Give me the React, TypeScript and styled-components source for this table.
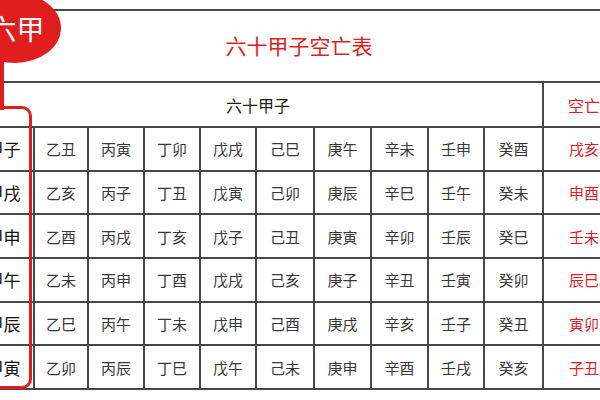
import styled, { createGlobalStyle } from 'styled-components';

const GlobalStyle = createGlobalStyle`
  html, body {
    margin: 0;
    padding: 0;
    background: #fff;
  }
  body {
    width: 600px;
    height: 400px;
    overflow: hidden;
    font-family: "Noto Sans CJK SC", "Noto Sans", sans-serif;
  }
`;

const RED = '#e01e1e';
const LINE = '2px solid #474747';

const Page = styled.div`
  position: relative;
  width: 600px;
  height: 400px;
  overflow: hidden;
  padding-top: 9px;
  box-sizing: border-box;
`;

const Table = styled.table`
  border-collapse: collapse;
  table-layout: fixed;
  width: 652px;
  margin-left: -28px;
`;

const TitleCell = styled.td`
  height: 68px;
  border: ${LINE};
  text-align: center;
  color: ${RED};
  font-size: 21px;
  padding: 0 0 2px;
`;

const HeadCell = styled.td<{ $red?: boolean }>`
  height: 43px;
  border: ${LINE};
  text-align: center;
  font-size: 16px;
  padding: 0;
  color: ${(p) => (p.$red ? RED : '#1e1e1e')};
`;

const Cell = styled.td<{ $kind?: 'first' | 'void' }>`
  height: 41.7px;
  border: ${LINE};
  text-align: center;
  padding: 0;
  font-size: ${(p) => (p.$kind === 'first' ? '17px' : '15px')};
  color: ${(p) =>
    p.$kind === 'void' ? RED : p.$kind === 'first' ? '#111' : '#383838'};
`;

const Bubble = styled.div`
  position: absolute;
  left: -32px;
  top: -7px;
  width: 93px;
  height: 70px;
  border-radius: 50%;
  background: ${RED};
  color: #fff;
  font-size: 28px;
  display: flex;
  align-items: center;
  justify-content: center;
  padding-left: 4px;
  box-sizing: border-box;
`;

const Tail = styled.div`
  position: absolute;
  left: 0;
  top: 58px;
  width: 4px;
  height: 52px;
  background: ${RED};
`;

const Frame = styled.div`
  position: absolute;
  left: -20px;
  top: 106px;
  width: 52px;
  height: 283px;
  border: 3px solid ${RED};
  border-radius: 10px;
  box-sizing: border-box;
`;

const rows: { cells: string[]; void: string }[] = [
  { cells: ['甲子', '乙丑', '丙寅', '丁卯', '戊戌', '己巳', '庚午', '辛未', '壬申', '癸酉'], void: '戌亥' },
  { cells: ['甲戌', '乙亥', '丙子', '丁丑', '戊寅', '己卯', '庚辰', '辛巳', '壬午', '癸未'], void: '申酉' },
  { cells: ['甲申', '乙酉', '丙戌', '丁亥', '戊子', '己丑', '庚寅', '辛卯', '壬辰', '癸巳'], void: '壬未' },
  { cells: ['甲午', '乙未', '丙申', '丁酉', '戊戌', '己亥', '庚子', '辛丑', '壬寅', '癸卯'], void: '辰巳' },
  { cells: ['甲辰', '乙巳', '丙午', '丁未', '戊申', '己酉', '庚戌', '辛亥', '壬子', '癸丑'], void: '寅卯' },
  { cells: ['甲寅', '乙卯', '丙辰', '丁巳', '戊午', '己未', '庚申', '辛酉', '壬戌', '癸亥'], void: '子丑' },
];

const colWidths = [61, 54, 56, 56, 56, 58, 57, 57, 56, 59, 82];

export default function App() {
  return (
    <>
      <GlobalStyle />
      <Page>
        <Table>
          <colgroup>
            {colWidths.map((w, i) => (
              <col key={i} style={{ width: w }} />
            ))}
          </colgroup>
          <tbody>
            <tr>
              <TitleCell colSpan={11}>六十甲子空亡表</TitleCell>
            </tr>
            <tr>
              <HeadCell colSpan={10}>六十甲子</HeadCell>
              <HeadCell $red>空亡</HeadCell>
            </tr>
            {rows.map((r) => (
              <tr key={r.cells[0]}>
                {r.cells.map((c, i) => (
                  <Cell key={c + i} $kind={i === 0 ? 'first' : undefined}>
                    {c}
                  </Cell>
                ))}
                <Cell $kind="void">{r.void}</Cell>
              </tr>
            ))}
          </tbody>
        </Table>
        <Tail />
        <Frame />
        <Bubble>六甲</Bubble>
      </Page>
    </>
  );
}
